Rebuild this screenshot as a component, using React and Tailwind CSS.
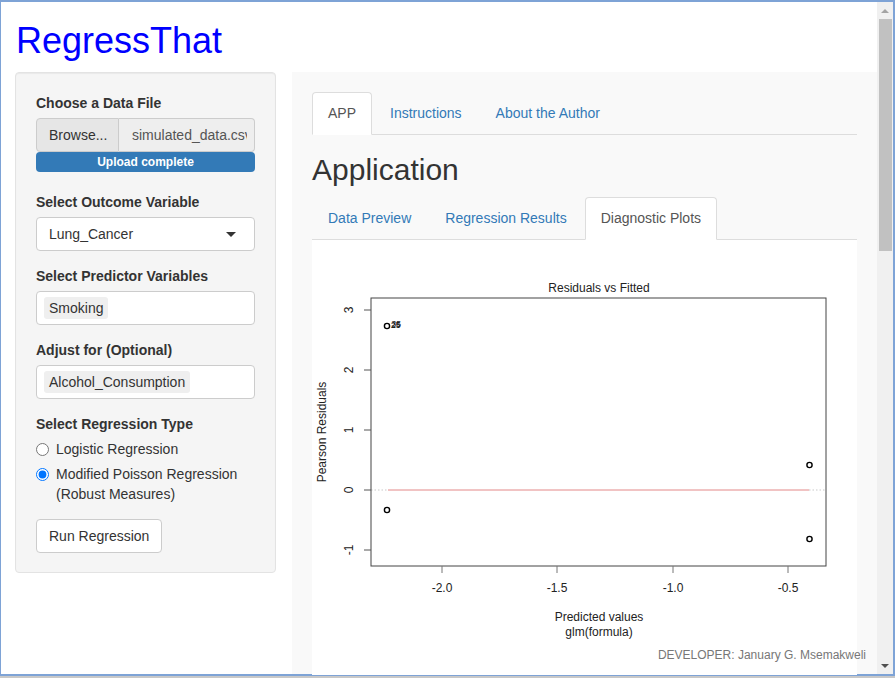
import React from "react";

const font = "font-['Liberation_Sans',Arial,sans-serif]";

const yTicks = [
  ["3", 70],
  ["2", 130],
  ["1", 190],
  ["0", 250],
  ["-1", 310],
];

const xTicks = [
  ["-2.0", 130],
  ["-1.5", 245],
  ["-1.0", 361],
  ["-0.5", 476],
];

const points = [
  [75, 86],
  [75, 270],
  [497.5, 225],
  [497.5, 299],
];

function ResidualPlot() {
  return (
    <svg width="545" height="435" viewBox="0 0 545 435" className="block">
      <g fontFamily="'Liberation Sans', Arial, sans-serif" fill="#222">
        <text x="287" y="52" fontSize="12" textAnchor="middle">
          Residuals vs Fitted
        </text>

        {/* zero line */}
        <line x1="59" y1="250" x2="76" y2="250" stroke="#bbb" strokeWidth="0.8" strokeDasharray="1.5 2" />
        <line x1="76" y1="250" x2="497" y2="250" stroke="#e07a7a" strokeWidth="0.9" />
        <line x1="497" y1="250" x2="514" y2="250" stroke="#bbb" strokeWidth="0.8" strokeDasharray="1.5 2" />

        <rect x="59" y="58" width="455" height="268" fill="none" stroke="#444" strokeWidth="1" />

        {yTicks.map(([label, y]) => (
          <g key={label}>
            <line x1="52" y1={y} x2="59" y2={y} stroke="#555" strokeWidth="1" />
            <text
              fontSize="12"
              textAnchor="middle"
              transform={`translate(41 ${y}) rotate(-90)`}
            >
              {label}
            </text>
          </g>
        ))}

        {xTicks.map(([label, x]) => (
          <g key={label}>
            <line x1={x} y1="326" x2={x} y2="333" stroke="#777" strokeWidth="1" />
            <text x={x} y="352" fontSize="12" textAnchor="middle">
              {label}
            </text>
          </g>
        ))}

        <text fontSize="12" textAnchor="middle" transform="translate(13.5 192) rotate(-90)">
          Pearson Residuals
        </text>
        <text x="287" y="381" fontSize="12" textAnchor="middle">
          Predicted values
        </text>
        <text x="287" y="396" fontSize="12" textAnchor="middle">
          glm(formula)
        </text>

        {points.map(([x, y], i) => (
          <circle key={i} cx={x} cy={y} r="2.6" fill="none" stroke="#000" strokeWidth="1.4" />
        ))}
        <text x="79" y="88" fontSize="8.5" fontWeight="bold">
          25
        </text>
        <text x="79.6" y="87.4" fontSize="8.5">
          35
        </text>
      </g>
    </svg>
  );
}

function Tabs({ items, active }) {
  return (
    <div className="flex border-b border-[#ddd]">
      {items.map((item) =>
        item === active ? (
          <div
            key={item}
            className="-mb-px mr-[2px] rounded-t-[4px] border border-[#ddd] border-b-white bg-white px-[15px] py-[10px] leading-[20px] text-[#555]"
          >
            {item}
          </div>
        ) : (
          <div
            key={item}
            className="mr-[2px] border border-transparent px-[15px] py-[10px] leading-[20px] text-[#337ab7]"
          >
            {item}
          </div>
        )
      )}
    </div>
  );
}

function Chip({ text }) {
  return (
    <div className="flex h-[34px] items-center rounded-[4px] border border-[#ccc] bg-white px-[7px]">
      <span className="rounded-[3px] bg-[#efefef] px-[5px] leading-[22px]">{text}</span>
    </div>
  );
}

function Sidebar() {
  return (
    <div className="w-[261px] rounded-[4px] border border-[#e3e3e3] bg-[#f5f5f5] px-5 pb-[19px] pt-5 shadow-[inset_0_1px_1px_rgba(0,0,0,0.05)]">
      <div className="mb-[5px] font-bold leading-[20px]">Choose a Data File</div>
      <div className="flex h-[34px]">
        <div className="flex w-[83px] items-center rounded-l-[4px] border border-[#ccc] bg-[#e6e6e6] px-[12px]">
          Browse...
        </div>
        <div className="flex min-w-0 flex-1 items-center rounded-r-[4px] border border-l-0 border-[#ccc] bg-[#eee] pl-[13px] pr-[7px] text-[#555]">
          <span className="overflow-hidden whitespace-nowrap">simulated_data.csv</span>
        </div>
      </div>
      <div className="flex h-[20px] items-center justify-center rounded-[4px] bg-[#337ab7] text-[12px] font-bold text-white">
        Upload complete
      </div>

      <div className="mb-[5px] mt-5 font-bold leading-[20px]">Select Outcome Variable</div>
      <div className="flex h-[34px] items-center justify-between rounded-[4px] border border-[#ccc] bg-white pl-[12px] pr-[18px]">
        <span>Lung_Cancer</span>
        <span className="h-0 w-0 border-x-[5px] border-t-[5px] border-x-transparent border-t-[#333]" />
      </div>

      <div className="mb-[5px] mt-[15px] font-bold leading-[20px]">Select Predictor Variables</div>
      <Chip text="Smoking" />

      <div className="mb-[5px] mt-[15px] font-bold leading-[20px]">Adjust for (Optional)</div>
      <Chip text="Alcohol_Consumption" />

      <div className="mt-[15px] font-bold leading-[20px]">Select Regression Type</div>
      <label className="mt-[5px] flex items-start gap-[7px] leading-[20px]">
        <input type="radio" name="rt" className="m-0 mt-[4px] h-[13px] w-[13px]" />
        <span>Logistic Regression</span>
      </label>
      <label className="mt-[5px] flex items-start gap-[7px] leading-[20px]">
        <input type="radio" name="rt" defaultChecked className="m-0 mt-[4px] h-[13px] w-[13px]" />
        <span>
          Modified Poisson Regression
          <br />
          (Robust Measures)
        </span>
      </label>

      <button className="mt-[15px] h-[34px] rounded-[4px] border border-[#ccc] bg-white px-[12px] leading-[20px] text-[#333]">
        Run Regression
      </button>
    </div>
  );
}

function Scrollbar() {
  return (
    <div className="flex w-[16px] flex-col bg-[#f0f0f0]">
      <div className="flex h-[17px] items-center justify-center">
        <span className="h-0 w-0 border-x-[4px] border-b-[4px] border-x-transparent border-b-[#a3a3a3]" />
      </div>
      <div className="ml-[2px] mr-[1px] h-[232px] bg-[#c1c1c1]" />
      <div className="flex-1" />
      <div className="flex h-[17px] items-center justify-center">
        <span className="h-0 w-0 border-x-[4px] border-t-[4px] border-x-transparent border-t-[#505050]" />
      </div>
    </div>
  );
}

export default function App() {
  return (
    <div className={`flex h-[678px] w-[895px] flex-col overflow-hidden bg-white text-[14px] text-[#333] ${font}`}>
      <div className="h-[2px] bg-[#7ea3d6]" />
      <div className="flex min-h-0 flex-1">
        <div className="w-px bg-[#7ea3d6]" />
        <div className="relative flex min-w-0 flex-1 flex-col">
          <h1 className="mb-[11px] mt-[19px] pl-[15px] text-[36px] leading-[40px] text-[#0000ff]">
            RegressThat
          </h1>
          <div className="flex min-h-0 flex-1 items-start pl-[14px]">
            <Sidebar />
            <div className="ml-[16px] flex w-[585px] flex-col self-stretch bg-[#f9f9f9] px-5 pt-5">
              <Tabs items={["APP", "Instructions", "About the Author"]} active="APP" />
              <h2 className="mb-[11px] mt-[18px] text-[30px] leading-[33px] text-[#333]">Application</h2>
              <Tabs
                items={["Data Preview", "Regression Results", "Diagnostic Plots"]}
                active="Diagnostic Plots"
              />
              <div className="flex-1 bg-white">
                <ResidualPlot />
              </div>
            </div>
          </div>
          <div className="absolute bottom-[10px] right-[11px] text-[12px] leading-[17px] text-[#777]">
            DEVELOPER: January G. Msemakweli
          </div>
        </div>
        <Scrollbar />
        <div className="w-[2px] bg-[#7ea3d6]" />
      </div>
      <div className="h-[2px] bg-[#7ea3d6]" />
      <div className="h-[2px] bg-[#c8c8c8]" />
    </div>
  );
}
